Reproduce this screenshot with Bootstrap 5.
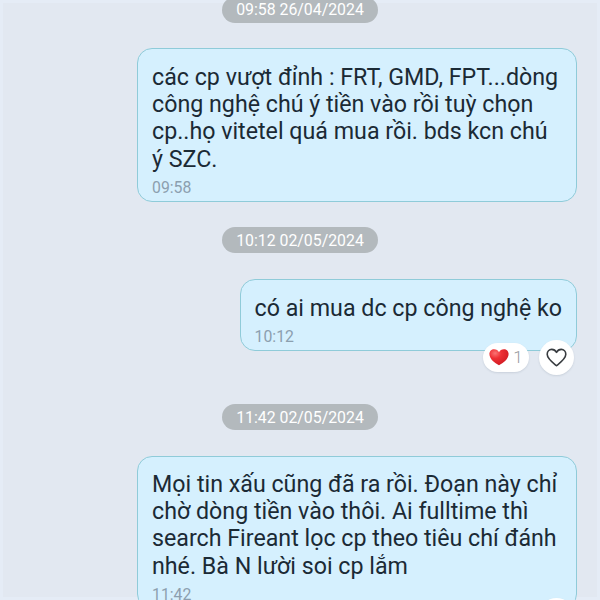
<!DOCTYPE html>
<html lang="vi">
  <head>
    <meta charset="UTF-8" />
    <meta name="viewport" content="width=device-width, initial-scale=1.0" />
    <title>Chat</title>
    <link
      href="https://cdn.jsdelivr.net/npm/bootstrap@5.3.0/dist/css/bootstrap.min.css"
      rel="stylesheet"
    />
    <style>
      body {
        background-color: #e2e8f1;
        font-family: Roboto, "Liberation Sans", sans-serif;
        color: #1b2a35;
      }
      .chat {
        height: 600px;
        padding-right: 23px;
        box-shadow: inset 0 0 0 3px #e5ecf6;
      }
      .stamp {
        height: 26px;
        padding: 0 14px;
        margin-left: 23px;
        background-color: #b3b9bd;
        color: #fff;
        font-size: 15.85px;
        line-height: 26px;
        white-space: nowrap;
      }
      .stamp-first {
        margin-top: -3px;
      }
      .stamp-next {
        margin-top: 25px;
        line-height: 28px;
      }
      .stamp-last {
        margin-top: 53px;
        line-height: 28px;
      }
      .bubble {
        margin-top: 25px;
        padding: 15px 14px 4px;
        border: 1px solid #8fcbd9;
        border-radius: 15px;
        background-color: #d5f0fe;
      }
      .bubble-next {
        margin-top: 26px;
      }
      .bubble-last {
        margin-top: 26px;
        padding-top: 14px;
      }
      .bubble-wide {
        width: 440px;
      }
      .bubble-text {
        margin: 0;
        font-size: 23.22px;
        line-height: 27.2px;
        white-space: nowrap;
      }
      .bubble-time {
        padding-top: 6px;
        color: #8c9faf;
        font-size: 15.8px;
        line-height: 18px;
      }
      .reactions {
        top: 60px;
        right: 2px;
      }
      .reactions-last {
        top: 141px;
      }
      .reaction-count {
        width: 46px;
        height: 29px;
        margin-right: 2px;
        color: #999c9f;
        font-size: 17px;
        font-weight: 300;
        box-shadow: 0 1px 2px rgba(60, 80, 100, 0.15);
      }
      .reaction-add {
        width: 35px;
        height: 35px;
        box-shadow: 0 1px 2px rgba(60, 80, 100, 0.15);
      }
    </style>
  </head>
  <body>
    <main class="chat d-flex flex-column align-items-end overflow-hidden">
      <div class="stamp stamp-first flex-shrink-0 rounded-pill align-self-center">09:58 26/04/2024</div>

      <div class="bubble bubble-wide flex-shrink-0">
        <p class="bubble-text">
          các cp vượt đỉnh : FRT, GMD, FPT...dòng<br />
          công nghệ chú ý tiền vào rồi tuỳ chọn<br />
          cp..họ vitetel quá mua rồi. bds kcn chú<br />
          ý SZC.
        </p>
        <div class="bubble-time">09:58</div>
      </div>

      <div class="stamp stamp-next flex-shrink-0 rounded-pill align-self-center">10:12 02/05/2024</div>

      <div class="bubble bubble-next position-relative flex-shrink-0">
        <p class="bubble-text">có ai mua dc cp công nghệ ko</p>
        <div class="bubble-time">10:12</div>
        <div class="reactions position-absolute d-flex align-items-center gap-2">
          <div class="reaction-count d-flex align-items-center justify-content-center gap-1 bg-white rounded-pill">
            <svg width="20" height="18" viewBox="0 0 20 18">
              <defs>
                <radialGradient id="heart" cx="0.3" cy="0.25" r="0.8">
                  <stop offset="0" stop-color="#fb7474" />
                  <stop offset="0.4" stop-color="#ee2f34" />
                  <stop offset="1" stop-color="#cf1a22" />
                </radialGradient>
              </defs>
              <path fill="url(#heart)" d="M10 17.3C5.700 15.200.4 11 .4 6.100.4 3.200 2.500 1.200 5.100 1.200c2.200 0 4 1.100 4.900 3 .9-1.900 2.700-3 4.900-3 2.600 0 4.700 2 4.700 4.900 0 4.900-5.300 9.100-9.600 11.200z" />
            </svg>
            <span>1</span>
          </div>
          <div class="reaction-add d-flex align-items-center justify-content-center bg-white rounded-circle">
            <svg width="21" height="19" viewBox="0 0 21 19">
              <path fill="none" stroke="#383c40" stroke-width="1.6" stroke-linejoin="round" d="M10.500 17.700C6.500 14.500 1.200 10.800 1.200 6.300 1.200 3.400 3.200 1.400 5.700 1.400c2 0 3.800 1.100 4.800 3 1-1.900 2.800-3 4.800-3 2.500 0 4.500 2 4.500 4.900 0 4.500-5.300 8.200-9.300 11.400z" />
            </svg>
          </div>
        </div>
      </div>

      <div class="stamp stamp-last flex-shrink-0 rounded-pill align-self-center">11:42 02/05/2024</div>

      <div class="bubble bubble-last bubble-wide position-relative flex-shrink-0">
        <p class="bubble-text">
          Mọi tin xấu cũng đã ra rồi. Đoạn này chỉ<br />
          chờ dòng tiền vào thôi. Ai fulltime thì<br />
          search Fireant lọc cp theo tiêu chí đánh<br />
          nhé. Bà N lười soi cp lắm
        </p>
        <div class="bubble-time">11:42</div>
        <div class="reactions reactions-last position-absolute">
          <div class="reaction-add bg-white rounded-circle"></div>
        </div>
      </div>
    </main>
    <script src="https://cdn.jsdelivr.net/npm/bootstrap@5.3.0/dist/js/bootstrap.bundle.min.js"></script>
  </body>
</html>
